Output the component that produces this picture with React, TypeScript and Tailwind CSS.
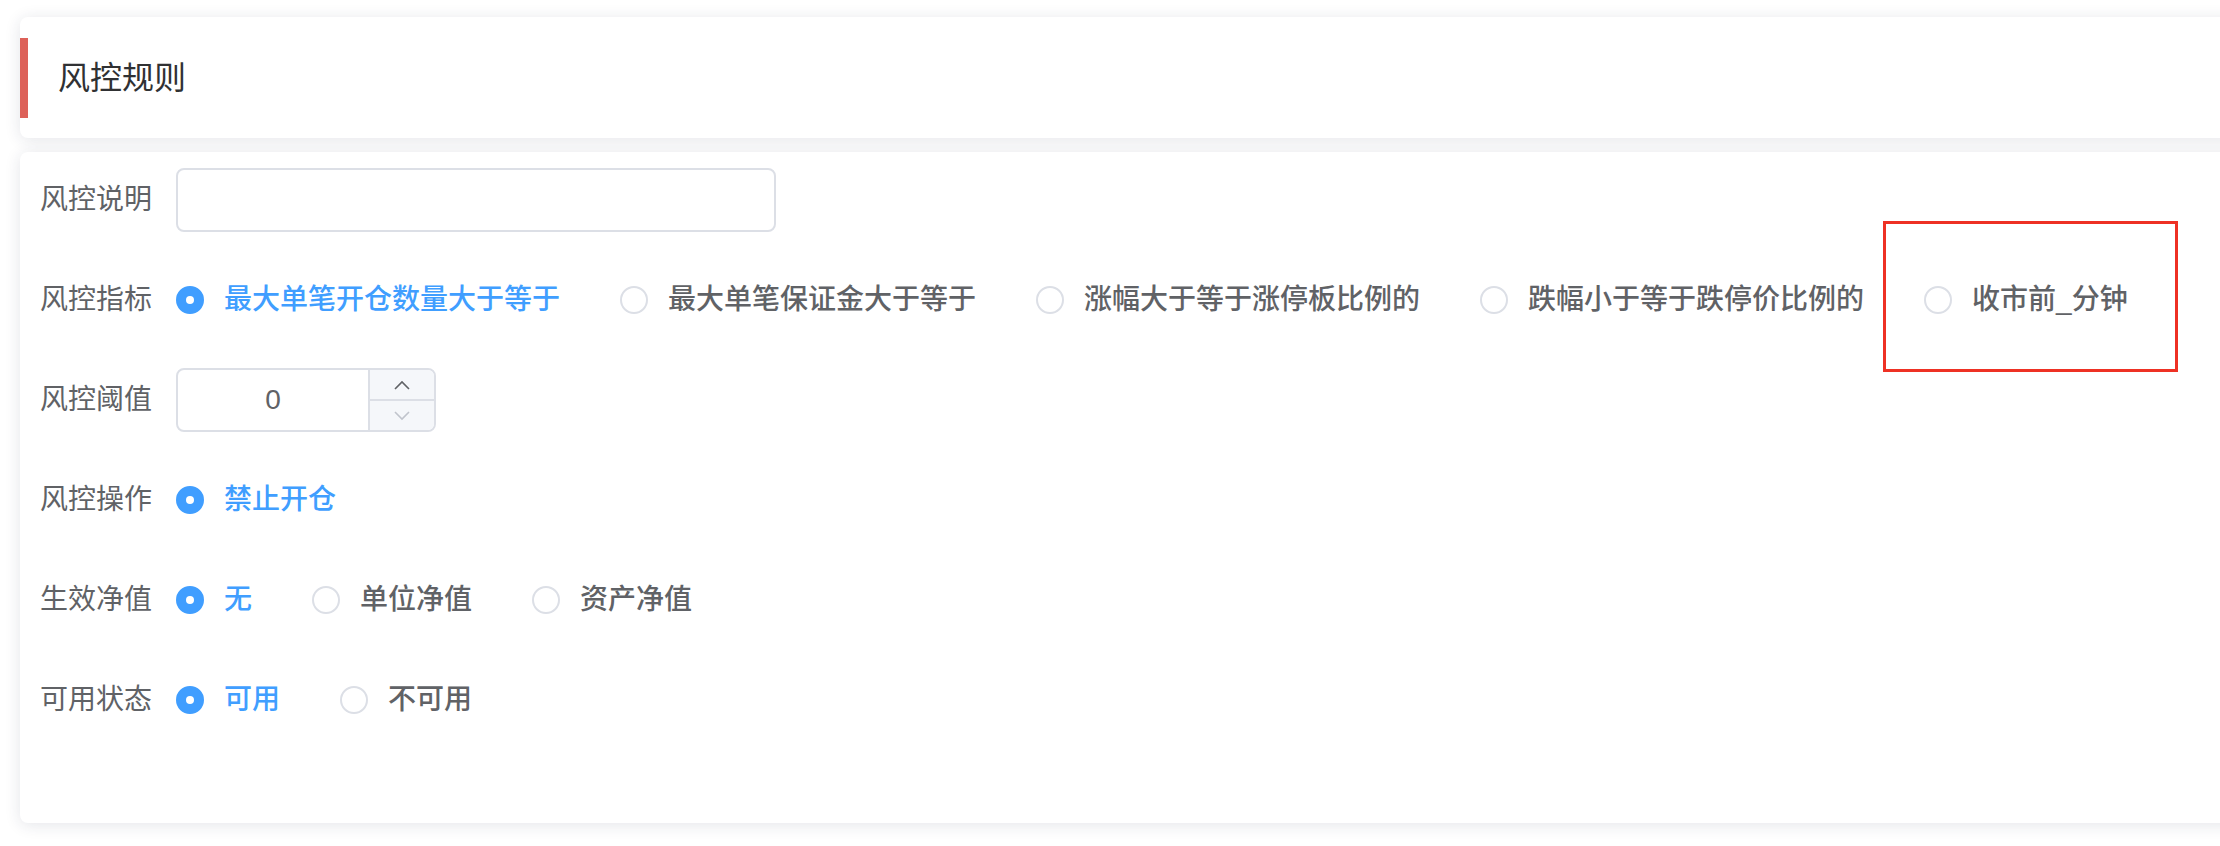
import React from "react";

type Opt = { label: string; checked?: boolean; marked?: boolean };

const font = "font-['Liberation_Sans','Noto_Sans_CJK_SC',sans-serif]";

const Radio = ({ label, checked, marked }: Opt) => (
  <label className="relative flex items-center mr-[60px] cursor-pointer select-none">
    {checked ? (
      <span className="w-[28px] h-[28px] rounded-full bg-[#409eff] border-2 border-[#409eff] flex items-center justify-center">
        <span className="w-[8px] h-[8px] rounded-full bg-white" />
      </span>
    ) : (
      <span className="w-[28px] h-[28px] rounded-full bg-white border-2 border-[#dcdfe6]" />
    )}
    <span
      className={`pl-[20px] text-[28px] leading-[64px] font-medium whitespace-nowrap ${
        checked ? "text-[#409eff]" : "text-[#606266]"
      }`}
    >
      {label}
    </span>
    {marked && (
      <span className="absolute left-[-41px] top-[-47px] w-[295px] h-[151px] border-[3px] border-[#ee3124] pointer-events-none" />
    )}
  </label>
);

const FormItem = ({ label, children }: { label: string; children: React.ReactNode }) => (
  <div className="flex items-center h-[64px] mb-[36px]">
    <div className="w-[136px] pr-[24px] text-right text-[28px] leading-[64px] text-[#606266] whitespace-nowrap">
      {label}
    </div>
    <div className="flex items-center">{children}</div>
  </div>
);

const Chevron = ({ up, color }: { up?: boolean; color: string }) => (
  <svg width="16" height="10" viewBox="0 0 16 10" fill="none">
    <polyline
      points={up ? "1,9 8,2 15,9" : "1,1 8,8 15,1"}
      stroke={color}
      strokeWidth="1.6"
      strokeLinejoin="miter"
    />
  </svg>
);

export default function App() {
  return (
    <div className={`w-[2220px] h-[846px] bg-white overflow-hidden pt-[17px] pl-[20px] ${font}`}>
      {/* header card */}
      <div className="w-[2300px] h-[121px] bg-white rounded-[8px] shadow-[0_2px_16px_0_rgba(30,40,70,0.12)] flex items-center">
        <div className="w-[8px] h-[80px] bg-[#dd6159]" />
        <h2 className="ml-[30px] text-[32px] text-[#303133] font-normal">风控规则</h2>
      </div>

      {/* form card */}
      <div className="mt-[14px] w-[2300px] h-[671px] bg-white rounded-[8px] shadow-[0_2px_16px_0_rgba(30,40,70,0.12)] pt-[16px] pl-[20px]">
        <FormItem label="风控说明">
          <input className="w-[600px] h-[64px] border-2 border-[#dcdfe6] rounded-[8px] px-[30px] text-[28px] text-[#606266] outline-none" />
        </FormItem>

        <FormItem label="风控指标">
          <Radio label="最大单笔开仓数量大于等于" checked />
          <Radio label="最大单笔保证金大于等于" />
          <Radio label="涨幅大于等于涨停板比例的" />
          <Radio label="跌幅小于等于跌停价比例的" />
          <Radio label="收市前_分钟" marked />
        </FormItem>

        <FormItem label="风控阈值">
          <div className="w-[260px] h-[64px] border-2 border-[#dcdfe6] rounded-[8px] flex overflow-hidden">
            <div className="flex-1 flex items-center justify-center text-[28px] text-[#606266]">0</div>
            <div className="w-[66px] border-l-2 border-[#dcdfe6] bg-[#f5f7fa] flex flex-col">
              <div className="flex-1 flex items-center justify-center">
                <Chevron up color="#606266" />
              </div>
              <div className="flex-1 flex items-center justify-center border-t-2 border-[#dcdfe6]">
                <Chevron color="#c0c4cc" />
              </div>
            </div>
          </div>
        </FormItem>

        <FormItem label="风控操作">
          <Radio label="禁止开仓" checked />
        </FormItem>

        <FormItem label="生效净值">
          <Radio label="无" checked />
          <Radio label="单位净值" />
          <Radio label="资产净值" />
        </FormItem>

        <FormItem label="可用状态">
          <Radio label="可用" checked />
          <Radio label="不可用" />
        </FormItem>
      </div>
    </div>
  );
}
